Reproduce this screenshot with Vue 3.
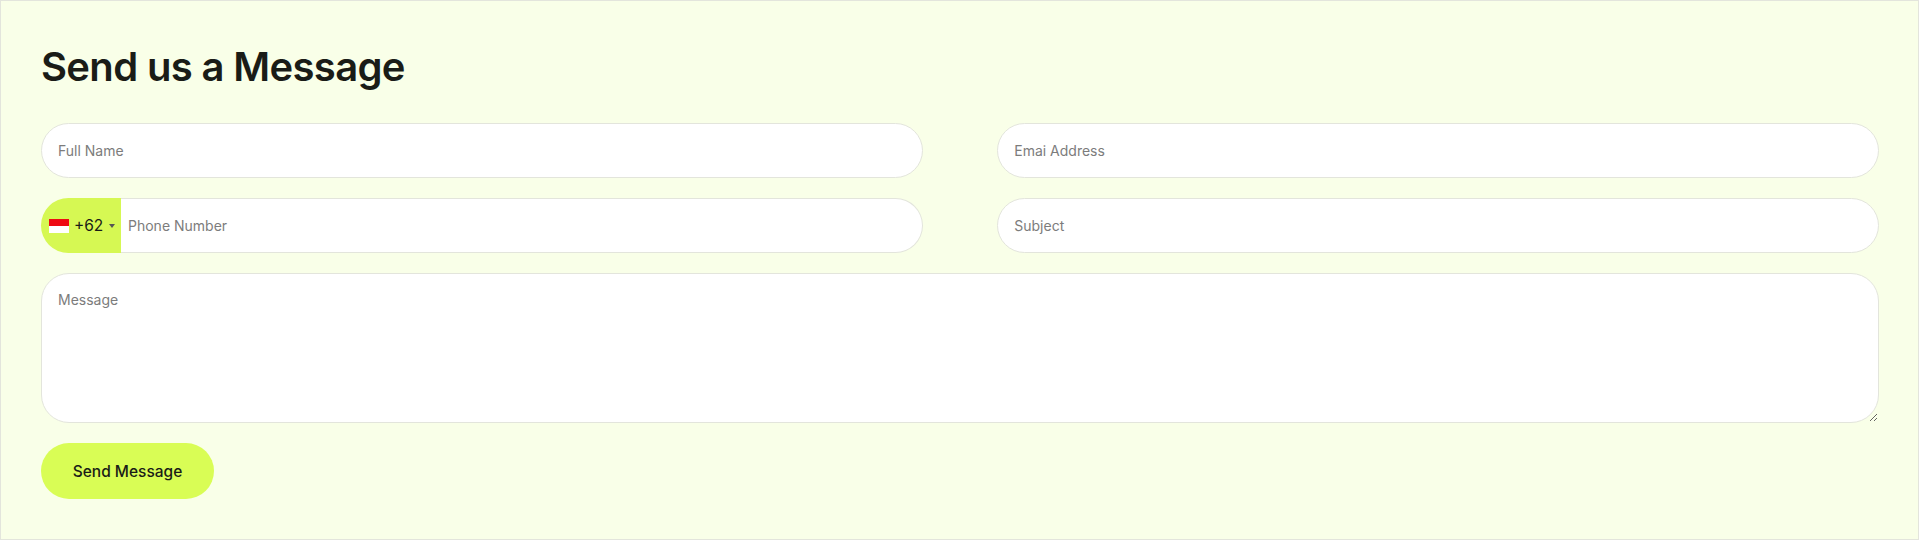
<script setup>
</script>

<template>
  <section class="panel">
    <h2 class="title">Send us a Message</h2>
    <form class="form" @submit.prevent>
      <input class="field" type="text" placeholder="Full Name" />
      <input class="field" type="text" placeholder="Emai Address" />
      <div class="phone">
        <div class="dial">
          <svg class="flag" viewBox="0 0 20 14" width="20" height="14" aria-hidden="true">
            <rect width="20" height="7" fill="#ee0a12" />
            <rect y="7" width="20" height="7" fill="#fff" />
          </svg>
          <span class="code">+62</span>
          <span class="caret"></span>
        </div>
        <input class="phone-input" type="tel" placeholder="Phone Number" />
      </div>
      <input class="field" type="text" placeholder="Subject" />
      <textarea class="message" placeholder="Message"></textarea>
      <div class="actions">
        <button class="send" type="submit">Send Message</button>
      </div>
    </form>
  </section>
</template>

<style>
html, body { margin: 0; background: #f9ffe8; }
</style>

<style scoped>
.panel {
  box-sizing: border-box;
  width: 1919px;
  height: 540px;
  padding: 40px 39px 40px 40px;
  background: #f9ffe8;
  border: 1px solid #e3e5dc;
  font-family: Inter, "Liberation Sans", sans-serif;
  color: #1a1c17;
}
.title {
  margin: 0 0 30px;
  font-size: 40px;
  line-height: 52px;
  font-weight: 600;
  letter-spacing: -0.65px;
}
.form {
  display: grid;
  grid-template-columns: 1fr 1fr;
  column-gap: 74.5px;
  row-gap: 20px;
}
.field, .message {
  box-sizing: border-box;
  border: 1px solid #e3e5dc;
  background: #fff;
  outline: none;
}
.field, .phone-input, .message {
  font-family: Inter, "Liberation Sans", sans-serif;
  font-size: 14px;
  color: #1a1c17;
}
.field::placeholder, .phone-input::placeholder, .message::placeholder {
  color: #7c7c7c;
  opacity: 1;
}
.field {
  width: 100%;
  height: 55px;
  padding: 0 16px;
  border-radius: 28px;
}
.phone {
  display: flex;
  height: 55px;
}
.dial {
  display: flex;
  align-items: center;
  flex: none;
  width: 80px;
  padding-left: 8px;
  box-sizing: border-box;
  background: #d6f853;
  border-radius: 28px 0 0 28px;
}
.flag { flex: none; }
.code { margin-left: 5px; font-size: 15.5px; color: #1a1c17; }
.caret {
  margin-left: 6px;
  border-left: 3px solid transparent;
  border-right: 3px solid transparent;
  border-top: 4px solid #555;
}
.phone-input {
  flex: 1;
  min-width: 0;
  box-sizing: border-box;
  border: 1px solid #e3e5dc;
  border-left: 0;
  border-radius: 0 28px 28px 0;
  padding: 0 7px;
  outline: none;
  background: #fff;
}
.message {
  grid-column: 1 / -1;
  display: block;
  width: 100%;
  height: 150px;
  padding: 17px 16px;
  border-radius: 28px;
  resize: vertical;
}
.actions { grid-column: 1 / -1; }
.send {
  display: block;
  width: 173px;
  height: 56px;
  border: 0;
  border-radius: 28px;
  background: #d9fd55;
  color: #1a1c17;
  font-family: Inter, "Liberation Sans", sans-serif;
  font-size: 15.5px;
  font-weight: 500;
}
</style>
